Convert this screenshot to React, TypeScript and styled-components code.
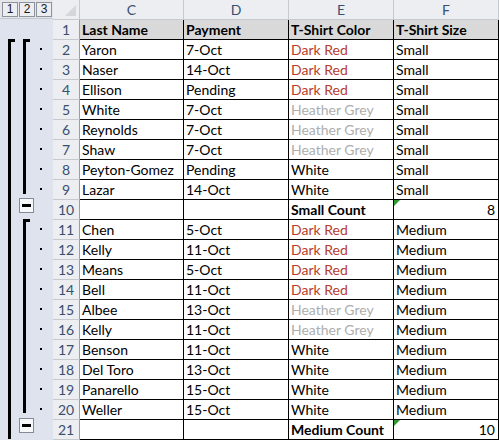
import styled, { createGlobalStyle } from 'styled-components';

type Row = {
	num: number;
	name: string;
	pay: string;
	color: string;
	size: string;
	total?: boolean;
};

const rows: Row[] = [
	{ num: 2, name: 'Yaron', pay: '7-Oct', color: 'Dark Red', size: 'Small' },
	{ num: 3, name: 'Naser', pay: '14-Oct', color: 'Dark Red', size: 'Small' },
	{ num: 4, name: 'Ellison', pay: 'Pending', color: 'Dark Red', size: 'Small' },
	{ num: 5, name: 'White', pay: '7-Oct', color: 'Heather Grey', size: 'Small' },
	{ num: 6, name: 'Reynolds', pay: '7-Oct', color: 'Heather Grey', size: 'Small' },
	{ num: 7, name: 'Shaw', pay: '7-Oct', color: 'Heather Grey', size: 'Small' },
	{ num: 8, name: 'Peyton-Gomez', pay: 'Pending', color: 'White', size: 'Small' },
	{ num: 9, name: 'Lazar', pay: '14-Oct', color: 'White', size: 'Small' },
	{ num: 10, name: '', pay: '', color: 'Small Count', size: '8', total: true },
	{ num: 11, name: 'Chen', pay: '5-Oct', color: 'Dark Red', size: 'Medium' },
	{ num: 12, name: 'Kelly', pay: '11-Oct', color: 'Dark Red', size: 'Medium' },
	{ num: 13, name: 'Means', pay: '5-Oct', color: 'Dark Red', size: 'Medium' },
	{ num: 14, name: 'Bell', pay: '11-Oct', color: 'Dark Red', size: 'Medium' },
	{ num: 15, name: 'Albee', pay: '13-Oct', color: 'Heather Grey', size: 'Medium' },
	{ num: 16, name: 'Kelly', pay: '11-Oct', color: 'Heather Grey', size: 'Medium' },
	{ num: 17, name: 'Benson', pay: '11-Oct', color: 'White', size: 'Medium' },
	{ num: 18, name: 'Del Toro', pay: '13-Oct', color: 'White', size: 'Medium' },
	{ num: 19, name: 'Panarello', pay: '15-Oct', color: 'White', size: 'Medium' },
	{ num: 20, name: 'Weller', pay: '15-Oct', color: 'White', size: 'Medium' },
	{ num: 21, name: '', pay: '', color: 'Medium Count', size: '10', total: true },
];

const colorTone: Record<string, string> = {
	'Dark Red': '#b53d2e',
	'Heather Grey': '#aeaeae',
};

// outline drawing: y is relative to the top of row 2
const OutlineDrawing = () => {
	const detail = rows.filter((r) => !r.total);
	return (
		<svg width='53' height='400' viewBox='0 0 53 400'>
			<rect x='8' y='0' width='3' height='400' fill='#000' />
			<rect x='8' y='0' width='7' height='3' fill='#000' />
			<rect x='23' y='0' width='3' height='155' fill='#000' />
			<rect x='23' y='0' width='7' height='3' fill='#000' />
			<rect x='23' y='180' width='3' height='194' fill='#000' />
			<rect x='23' y='180' width='7' height='3' fill='#000' />
			{detail.map((r) => (
				<rect key={r.num} x='40' y={(r.num - 2) * 20 + 9} width='2' height='2' fill='#000' />
			))}
			{[159, 379].map((y) => (
				<g key={y}>
					<rect x='19.5' y={y + 0.5} width='14' height='14' fill='#f7f8fa' stroke='#858b96' />
					<rect x='22' y={y + 6} width='9' height='3' fill='#000' />
				</g>
			))}
		</svg>
	);
};

const App = () => {
	return (
		<>
			<GlobalStyle />
			<Sheet>
				<Gutter>
					<LevelBar>
						<LevelButton>1</LevelButton>
						<LevelButton>2</LevelButton>
						<LevelButton>3</LevelButton>
					</LevelBar>
					<GutterBlank />
					<OutlineDrawing />
				</Gutter>

				<Corner>
					<CornerMark />
				</Corner>
				<ColHead>C</ColHead>
				<ColHead>D</ColHead>
				<ColHead>E</ColHead>
				<ColHead>F</ColHead>

				<RowHead>1</RowHead>
				<TitleCell>Last Name</TitleCell>
				<TitleCell>Payment</TitleCell>
				<TitleCell>T-Shirt Color</TitleCell>
				<TitleCell>T-Shirt Size</TitleCell>

				{rows.map((r) => (
					<Line key={r.num} r={r} />
				))}
			</Sheet>
		</>
	);
};

const Line = ({ r }: { r: Row }) => (
	<>
		<RowHead>{r.num}</RowHead>
		<Cell>{r.name}</Cell>
		<Cell>{r.pay}</Cell>
		<Cell $bold={r.total} $tone={colorTone[r.color]}>
			{r.color}
		</Cell>
		<Cell $right={r.total} $flag={r.total}>
			{r.size}
		</Cell>
	</>
);

export default App;

const GlobalStyle = createGlobalStyle`
	html, body {
		margin: 0;
		padding: 0;
		background: #ffffff;
		overflow: hidden;
	}
	body {
		font-family: 'Lato', 'Open Sans', sans-serif;
	}
`;

const Sheet = styled.div`
	display: grid;
	grid-template-columns: 53px 27px 104px 105px 105px 105px;
	grid-auto-rows: 20px;
	width: 499px;
`;

const Gutter = styled.div`
	grid-row: 1 / span 22;
	display: flex;
	flex-direction: column;
	background: #dfe3ee;
`;

const LevelBar = styled.div`
	height: 19px;
	display: flex;
	gap: 1px;
	padding: 2px 0 0 2px;
	box-sizing: border-box;
	background: #e4e6ea;
	border-bottom: 1px solid #c3c7cf;
`;

const LevelButton = styled.div`
	width: 14px;
	height: 13px;
	border: 1px solid #8d929b;
	background: #eceef2;
	font-family: 'Liberation Sans', Arial, sans-serif;
	font-size: 12px;
	line-height: 13px;
	text-align: center;
	color: #1b1b1b;
`;

const GutterBlank = styled.div`
	height: 20px;
	flex: none;
`;

const Corner = styled.div`
	position: relative;
	background: #eceef1;
	border-right: 1px solid #c6c9ce;
	border-bottom: 1px solid #c6c9ce;
`;

const CornerMark = styled.div`
	position: absolute;
	right: 3px;
	bottom: 3px;
	width: 0;
	height: 0;
	border-left: 11px solid transparent;
	border-bottom: 11px solid #d3d6db;
`;

const ColHead = styled.div`
	background: #eceef1;
	border-right: 1px solid #c6c9ce;
	border-bottom: 1px solid #c6c9ce;
	font-family: 'Lato', sans-serif;
	font-size: 14px;
	line-height: 19px;
	text-align: center;
	color: #3a4f70;
`;

const RowHead = styled.div`
	background: #eceef1;
	border-right: 1px solid #9a9ea6;
	border-bottom: 1px solid #c6c9ce;
	font-family: 'Lato', sans-serif;
	font-size: 14px;
	line-height: 19px;
	text-align: center;
	color: #3a4f70;
`;

const Cell = styled.div<{ $bold?: boolean; $tone?: string; $right?: boolean; $flag?: boolean }>`
	position: relative;
	border-right: 1px solid #000;
	border-bottom: 1px solid #000;
	padding: 0 3px 0 2px;
	font-size: 14px;
	line-height: 19px;
	white-space: nowrap;
	overflow: hidden;
	color: ${(p) => p.$tone || '#000'};
	font-weight: ${(p) => (p.$bold ? 700 : 400)};
	text-align: ${(p) => (p.$right ? 'right' : 'left')};

	&::before {
		content: '';
		display: ${(p) => (p.$flag ? 'block' : 'none')};
		position: absolute;
		left: 0;
		top: 0;
		border-top: 6px solid #2f9a2f;
		border-right: 6px solid transparent;
	}
`;

const TitleCell = styled(Cell)`
	background: #d9d9d9;
	font-weight: 700;
`;
